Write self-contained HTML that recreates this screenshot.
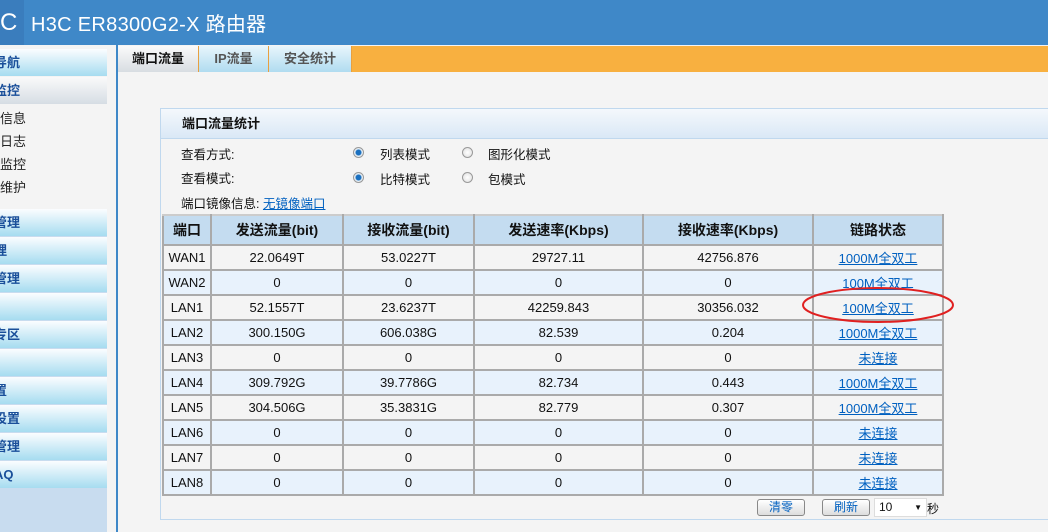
<!DOCTYPE html>
<html><head><meta charset="utf-8"><style>
*{margin:0;padding:0;box-sizing:border-box}
body{width:1048px;height:532px;overflow:hidden;background:#f4f4f4;font-family:"Liberation Sans","Noto Sans CJK SC",sans-serif;font-size:12px;color:#111;position:relative}
.a{position:absolute}
#hd{left:0;top:0;width:1048px;height:45px;background:#3f88c8}
#hd .logo{left:0;top:0;width:24px;height:45px;background:#3a7dbd;color:#fff;font-size:24px;line-height:45px}
#hd .t{left:31px;top:8px;color:#fff;font-size:20px;letter-spacing:0.3px}
#sb{left:0;top:45px;width:107px;height:487px;background:#c8dcef;overflow:hidden}
.bi{position:absolute;left:0;width:107px;height:27px;background:linear-gradient(#fbfdff,#a6dcf0);color:#1a4f9a;font-weight:bold;font-size:13px;line-height:27px;text-indent:-6px}
.si{position:absolute;left:0;font-size:13px;color:#222}
#vl{left:116px;top:45px;width:2px;height:487px;background:#3f88c8}
#tabs{left:118px;top:46px;width:930px;height:26px;background:#f8b040}
.tab{position:absolute;top:0;height:26px;line-height:25px;text-align:center;font-weight:bold;font-size:13px;border-right:1px solid #e8a040}
#panel{left:160px;top:108px;width:900px;height:412px;border:1px solid #c0d8ee;background:#f4f4f4}
#ph{left:0;top:0;width:900px;height:30px;background:linear-gradient(#f4f8fc,#dae8f6);border-bottom:1px solid #c0d8ee;font-weight:bold;font-size:13px;line-height:30px;padding-left:21px}
.lb{position:absolute;font-size:12.5px}
.rd{position:absolute;width:11px;height:11px;border-radius:50%;border:1px solid #999;background:radial-gradient(#fff,#ddd)}
.rd.on{background:radial-gradient(circle,#1a70c0 0 2.5px,#e6eef4 3.5px)}
table{position:absolute;left:162px;top:214px;border-collapse:collapse;border:1px solid #999}
td{border:2px solid #aaa;border-top:2px solid #ccc;height:25px;text-align:center;font-size:13px;padding:0}
tr.h td{background:#c4dcf0;font-weight:bold;font-size:14px;height:30px}
tr:nth-child(odd):not(.h) td{background:#e8f2fc}
tr:nth-child(even) td{background:#f4f4f4}
a{color:#0060c0;text-decoration:underline}
.btn{position:absolute;top:499px;height:17px;border:1px solid #888;border-radius:3px;background:linear-gradient(#fff,#ddd);color:#0060c0;font-size:12px;text-align:center;line-height:15px}
</style></head><body>
<div id="hd" class="a"><div class="a logo">C</div><div class="a t">H3C ER8300G2-X 路由器</div></div>
<div id="sb" class="a">
<div style="position:absolute;top:0;left:0;width:107px;height:164px;background:#f4f4f4"></div>
<div class="bi" style="top:4px">导航</div>
<div class="bi" style="top:32px;background:linear-gradient(#fafafa,#d6dde4)">监控</div>
<div class="si" style="top:63px">信息</div>
<div class="si" style="top:86px">日志</div>
<div class="si" style="top:109px">监控</div>
<div class="si" style="top:132px">维护</div>
<div class="bi" style="top:164px">管理</div>
<div class="bi" style="top:192px">理</div>
<div class="bi" style="top:220px">管理</div>
<div class="bi" style="top:248px">i</div>
<div class="bi" style="top:276px">专区</div>
<div class="bi" style="top:304px"></div>
<div class="bi" style="top:332px">置</div>
<div class="bi" style="top:360px">设置</div>
<div class="bi" style="top:388px">管理</div>
<div class="bi" style="top:416px">AQ</div>
</div>
<div id="vl" class="a"></div>
<div id="tabs" class="a">
<div class="tab" style="left:0;width:81px;background:linear-gradient(#fafafa,#d8dde2)">端口流量</div>
<div class="tab" style="left:81px;width:70px;background:linear-gradient(#e8f6fc,#b0dcf0);color:#555">IP流量</div>
<div class="tab" style="left:151px;width:83px;background:linear-gradient(#e8f6fc,#b0dcf0);color:#555">安全统计</div>
</div>
<div id="panel" class="a"><div id="ph" class="a">端口流量统计</div></div>
<div class="lb" style="left:181px;top:144px">查看方式:</div>
<div class="lb" style="left:181px;top:168px">查看模式:</div>
<div class="lb" style="left:181px;top:193px">端口镜像信息: <a>无镜像端口</a></div>
<div class="rd on" style="left:353px;top:147px"></div><div class="lb" style="left:380px;top:144px">列表模式</div>
<div class="rd" style="left:462px;top:147px"></div><div class="lb" style="left:488px;top:144px">图形化模式</div>
<div class="rd on" style="left:353px;top:172px"></div><div class="lb" style="left:380px;top:169px">比特模式</div>
<div class="rd" style="left:462px;top:172px"></div><div class="lb" style="left:488px;top:169px">包模式</div>
<table>
<colgroup><col style="width:48px"><col style="width:132px"><col style="width:131px"><col style="width:169px"><col style="width:170px"><col style="width:130px"></colgroup>
<tr class="h"><td>端口</td><td>发送流量(bit)</td><td>接收流量(bit)</td><td>发送速率(Kbps)</td><td>接收速率(Kbps)</td><td>链路状态</td></tr>
<tr><td>WAN1</td><td>22.0649T</td><td>53.0227T</td><td>29727.11</td><td>42756.876</td><td><a>1000M全双工</a></td></tr>
<tr><td>WAN2</td><td>0</td><td>0</td><td>0</td><td>0</td><td><a>100M全双工</a></td></tr>
<tr><td>LAN1</td><td>52.1557T</td><td>23.6237T</td><td>42259.843</td><td>30356.032</td><td><a>100M全双工</a></td></tr>
<tr><td>LAN2</td><td>300.150G</td><td>606.038G</td><td>82.539</td><td>0.204</td><td><a>1000M全双工</a></td></tr>
<tr><td>LAN3</td><td>0</td><td>0</td><td>0</td><td>0</td><td><a>未连接</a></td></tr>
<tr><td>LAN4</td><td>309.792G</td><td>39.7786G</td><td>82.734</td><td>0.443</td><td><a>1000M全双工</a></td></tr>
<tr><td>LAN5</td><td>304.506G</td><td>35.3831G</td><td>82.779</td><td>0.307</td><td><a>1000M全双工</a></td></tr>
<tr><td>LAN6</td><td>0</td><td>0</td><td>0</td><td>0</td><td><a>未连接</a></td></tr>
<tr><td>LAN7</td><td>0</td><td>0</td><td>0</td><td>0</td><td><a>未连接</a></td></tr>
<tr><td>LAN8</td><td>0</td><td>0</td><td>0</td><td>0</td><td><a>未连接</a></td></tr>
</table>
<div class="btn" style="left:757px;width:48px">清零</div>
<div class="btn" style="left:822px;width:48px">刷新</div>
<div class="a" style="left:874px;top:498px;width:53px;height:19px;background:#fff;border:1px solid #ddd;font-size:12px;padding-left:4px;line-height:17px">10<span style="position:absolute;right:4px;top:0;font-size:8px">▼</span></div>
<div class="a" style="left:927px;top:500px;font-size:12px">秒</div>
<svg class="a" style="left:0;top:0" width="1048" height="532"><ellipse cx="878" cy="305" rx="75" ry="17" fill="none" stroke="#e02020" stroke-width="2"/></svg>
</body></html>
